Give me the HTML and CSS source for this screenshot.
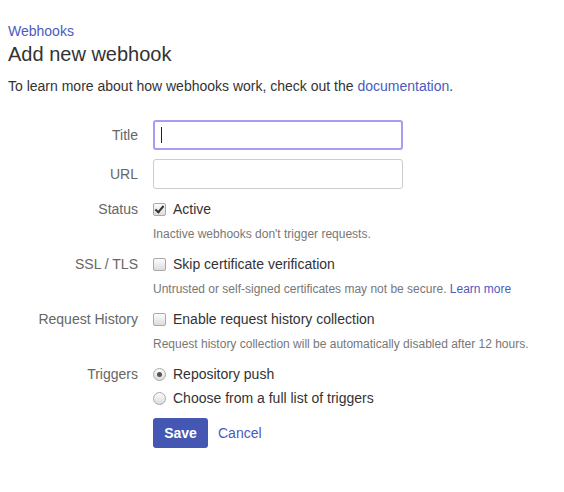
FILE: index.html
```html
<!DOCTYPE html>
<html>
<head>
<meta charset="utf-8">
<link rel="stylesheet" href="styles.css">
</head>
<body>
<div class="page">
  <a class="crumb" href="#">Webhooks</a>
  <h1 class="title">Add new webhook</h1>
  <p class="intro">To learn more about how webhooks work, check out the <a href="#">documentation</a>.</p>

  <form class="form">
    <div class="row">
      <label class="lbl">Title</label>
      <div class="ctl"><input class="text focus" type="text"><span class="caret"></span></div>
    </div>
    <div class="row gap-url">
      <label class="lbl">URL</label>
      <div class="ctl"><input class="text" type="text"></div>
    </div>
    <div class="row gap-field first-check">
      <label class="lbl line">Status</label>
      <div class="ctl">
        <label class="opt"><span class="box checked"></span>Active</label>
        <div class="help">Inactive webhooks don't trigger requests.</div>
      </div>
    </div>
    <div class="row gap-field">
      <label class="lbl line">SSL / TLS</label>
      <div class="ctl">
        <label class="opt"><span class="box"></span>Skip certificate verification</label>
        <div class="help">Untrusted or self-signed certificates may not be secure. <a href="#">Learn more</a></div>
      </div>
    </div>
    <div class="row gap-field">
      <label class="lbl line">Request History</label>
      <div class="ctl">
        <label class="opt"><span class="box"></span>Enable request history collection</label>
        <div class="help">Request history collection will be automatically disabled after 12 hours.</div>
      </div>
    </div>
    <div class="row gap-field">
      <label class="lbl line">Triggers</label>
      <div class="ctl">
        <label class="opt"><span class="radio on"></span>Repository push</label>
        <label class="opt opt2"><span class="radio"></span>Choose from a full list of triggers</label>
        <div class="actions">
          <button class="btn" type="button">Save</button>
          <a class="cancel" href="#">Cancel</a>
        </div>
      </div>
    </div>
  </form>
</div>
</body>
</html>
```

FILE: styles.css
```css
* { box-sizing: border-box; }
html, body { margin: 0; padding: 0; background: #fff; }
body {
  font-family: "Liberation Sans", Arial, sans-serif;
  font-size: 14px;
  color: #333;
}
a { color: #4a5bc0; text-decoration: none; }
.page { padding: 21px 8px 0 8px; }
.crumb { display: block; line-height: 20px; }
.title {
  margin: 2px 0 0 0;
  font-size: 20px;
  font-weight: normal;
  line-height: 22px;
  color: #333;
}
.intro { margin: 11px 0 0 0; line-height: 20px; }

.form { margin-top: 24px; }
.row {
  display: grid;
  grid-template-columns: 130px 1fr;
  column-gap: 15px;
  align-items: start;
}
.gap-url { margin-top: 9px; }
.first-check { margin-top: 10px; }
.gap-field + .gap-field { margin-top: 11px; }
.lbl {
  text-align: right;
  color: #666;
  line-height: 30px;
}
.lbl.line { line-height: 20px; }
.ctl { position: relative; }
.text {
  display: block;
  width: 250px;
  height: 30px;
  border: 1px solid #ccc;
  border-radius: 3px;
  padding: 4px 8px;
  font: inherit;
  outline: none;
  background: #fff;
}
.text.focus { border: 2px solid #a49cf5; }
.caret {
  position: absolute;
  left: 8px;
  top: 7px;
  width: 1px;
  height: 16px;
  background: #222;
}
.opt {
  display: flex;
  align-items: center;
  gap: 7px;
  line-height: 20px;
  color: #333;
}
.opt2 { margin-top: 4px; }
.box {
  width: 13px;
  height: 13px;
  border: 1px solid #a9a9a9;
  border-radius: 2px;
  background: linear-gradient(#fcfcfc, #dcdcdc);
  position: relative;
  flex: none;
}
.box.checked::after {
  content: "";
  position: absolute;
  left: 3px;
  top: 0px;
  width: 3px;
  height: 7px;
  border: solid #333;
  border-width: 0 2px 2px 0;
  transform: rotate(40deg);
}
.radio {
  width: 13px;
  height: 13px;
  border: 1px solid #a9a9a9;
  border-radius: 50%;
  background: linear-gradient(#fcfcfc, #dcdcdc);
  position: relative;
  flex: none;
}
.radio.on::after {
  content: "";
  position: absolute;
  left: 3px;
  top: 3px;
  width: 5px;
  height: 5px;
  border-radius: 50%;
  background: #555;
}
.help {
  margin-top: 6px;
  font-size: 12px;
  line-height: 18px;
  color: #777;
}
.actions {
  display: flex;
  align-items: center;
  gap: 10px;
  margin-top: 10px;
}
.btn {
  height: 30px;
  width: 55px;
  border: none;
  border-radius: 3px;
  background: #4357b3;
  color: #fff;
  font: bold 14px "Liberation Sans", Arial, sans-serif;
  padding: 0;
}
.cancel { line-height: 20px; }
```
